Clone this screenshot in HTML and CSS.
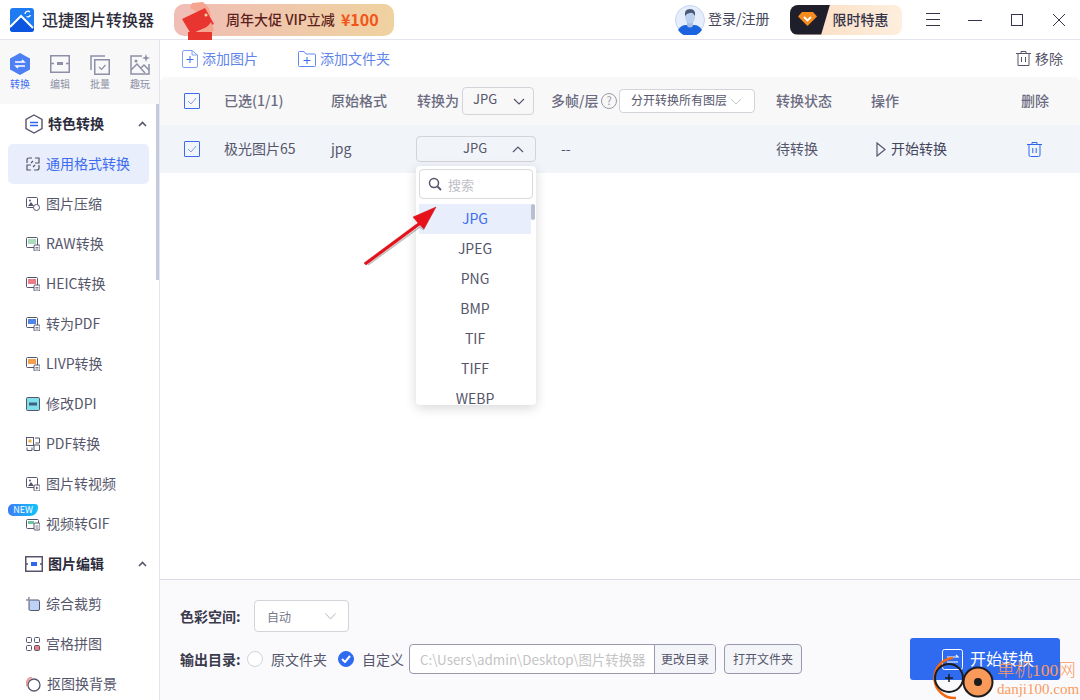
FILE: index.html
```html
<!DOCTYPE html>
<html lang="zh-CN">
<head>
	<meta charset="UTF-8">
	<title>迅捷图片转换器</title>
	<link rel="stylesheet" href="styles.css">
</head>
<body>
<div class="app">
	<div class="topbar">
		<svg class="logo" width="24" height="24" viewBox="0 0 24 24">
			<rect width="24" height="24" rx="3" fill="#1f7bf2"/>
			<path d="M0 18 L11 7 L24 20 V21 Q24 24 21 24 H3 Q0 24 0 21Z" fill="#0b55e0"/>
			<path d="M0 19 L11 8 L23 20" fill="none" stroke="#fff" stroke-width="2"/>
			<path d="M15 6 a3 3 0 0 1 5 -2 M20.500 7 a3 3 0 0 1 -4 1.500" fill="none" stroke="#fff" stroke-width="1.300"/>
		</svg>
		<div class="appName">迅捷图片转换器</div>
		<div class="promo">
			<svg class="promoIco" width="36" height="38" viewBox="0 0 36 38">
				<path d="M7 30 L31 30 L31 38 L7 38Z" fill="#e8352e"/>
				<path d="M9 6 L11 1 L22 0 L28 6 L30 14 L24 14Z" fill="#f4a58f"/>
				<path d="M1 17 L24 6 L33 22 L10 32Z" fill="#e9352f"/>
				<path d="M16 30 Q26 27 30 20 L33 28 L31 30Z" fill="#f4a58f"/>
				<circle cx="25" cy="13" r="1.500" fill="#ffd9a0"/>
			</svg>
			<span class="promoTxt">周年大促 VIP立减</span>
			<span class="promoNum">¥100</span>
		</div>
		<div class="userBox">
			<svg width="30" height="30" viewBox="0 0 30 30">
				<circle cx="15" cy="15" r="14.500" fill="#e6eefb" stroke="#c3d4f2"/>
				<path d="M3 25 Q6 20 11 20 H19 Q24 20 27 25 A14.500 14.500 0 0 1 3 25Z" fill="#1c63e0"/>
				<path d="M12 17 V21 Q15 24 18 21 V17Z" fill="#a9bfe6"/>
				<ellipse cx="15" cy="12" rx="5" ry="6.500" fill="#bcd0ef"/>
				<path d="M10 11 Q9 4 15 4 Q21 4 20 11 Q18 7 15 8 Q12 8 10 11Z" fill="#4a5a78"/>
			</svg>
			<span>登录/注册</span>
		</div>
		<div class="vip">
			<div class="vipIco">
				<svg width="19" height="14" viewBox="0 0 19 14">
					<path d="M4 0 H15 L19 4.500 L9.500 14 L0 4.500Z" fill="#f58a1f"/>
					<path d="M6 5 L9.500 8.500 L13 5" fill="none" stroke="#fff" stroke-width="1.800"/>
				</svg>
			</div>
			<div class="vipTxt">限时特惠</div>
		</div>
		<div class="winBtns">
			<svg width="14" height="13" viewBox="0 0 14 13"><path d="M0 .5 H14 M0 6.500 H14 M0 12.500 H14" stroke="#33334a" fill="none"/></svg>
			<svg class="winMin" width="14" height="14" viewBox="0 0 14 14"><path d="M0 7.500 H14" stroke="#33334a" fill="none"/></svg>
			<svg width="12" height="12" viewBox="0 0 12 12"><rect x=".5" y=".5" width="11" height="11" stroke="#33334a" fill="none"/></svg>
			<svg width="14" height="14" viewBox="0 0 14 14"><path d="M1 1 L13 13 M13 1 L1 13" stroke="#33334a" fill="none"/></svg>
		</div>
	</div>

	<div class="content">
		<div class="side">
			<div class="tabs">
				<div class="tab on">
					<svg width="20" height="22" viewBox="0 0 20 22">
						<path d="M10 0 L20 5.500 V16.500 L10 22 L0 16.500 V5.500Z" fill="#4d7ff5"/>
						<path d="M5 9 H14 L12 7 M15 13 H6 L8 15" fill="none" stroke="#fff" stroke-width="1.500"/>
					</svg>
					<span>转换</span>
				</div>
				<div class="tab">
					<svg width="20" height="22" viewBox="0 0 20 22">
						<rect x=".75" y="2.750" width="18.500" height="16.500" fill="none" stroke="#8d8fa6" stroke-width="1.500"/>
						<path d="M1 10.500 H4 M16 10.500 H19" stroke="#8d8fa6" stroke-width="1.500"/>
						<rect x="7" y="9" width="6" height="3" fill="#8d8fa6"/>
					</svg>
					<span>编辑</span>
				</div>
				<div class="tab">
					<svg width="20" height="22" viewBox="0 0 20 22">
						<path d="M1 17 V3 H15" fill="none" stroke="#8d8fa6" stroke-width="1.500"/>
						<rect x="4.750" y="6.750" width="14.500" height="14.500" fill="none" stroke="#8d8fa6" stroke-width="1.500"/>
						<path d="M9 14 L11.500 16.500 L15.500 12" fill="none" stroke="#8d8fa6" stroke-width="1.200"/>
					</svg>
					<span>批量</span>
				</div>
				<div class="tab">
					<svg width="20" height="22" viewBox="0 0 20 22">
						<path d="M12 3 H1 V21 H19 V11" fill="none" stroke="#8d8fa6" stroke-width="1.500"/>
						<path d="M1 17 L7 11 L15 20 M11 15 L14 12 L19 17" fill="none" stroke="#8d8fa6" stroke-width="1.500"/>
						<circle cx="6" cy="8" r="1.500" fill="#8d8fa6"/>
						<path d="M16 1 L17 4 L20 5 L17 6 L16 9 L15 6 L12 5 L15 4Z" fill="#8d8fa6"/>
					</svg>
					<span>趣玩</span>
				</div>
			</div>
			<div class="menu">
				<div class="group">
					<svg width="18" height="20" viewBox="0 0 18 20">
						<path d="M9 1 L17 5.500 V14.500 L9 19 L1 14.500 V5.500Z" fill="none" stroke="#55566b" stroke-width="1.400"/>
						<path d="M5 8.500 H13 M13 11.500 H5" stroke="#2f66ee" stroke-width="1.500"/>
					</svg>
					<span class="groupName">特色转换</span>
					<svg class="up" width="9" height="6" viewBox="0 0 9 6"><path d="M1 5 L4.500 1.500 L8 5" fill="none" stroke="#55566b" stroke-width="1.600"/></svg>
				</div>
				<div class="item on">
					<svg width="14" height="14" viewBox="0 0 14 14"><path d="M1 6 V3 Q1 1 3 1 H6 M9 1 H13 V6 H9 M5 8 H1 V13 H5 M8 13 H11 Q13 13 13 11 V8 M5 6 L7 4 M9 8 L7 10" fill="none" stroke="#55566b" stroke-width="1.200"/></svg>
					<span>通用格式转换</span>
				</div>
				<div class="item">
					<svg class="fmt" width="14" height="14" viewBox="0 0 14 14"><rect x=".5" y=".5" width="11" height="10" rx="1" fill="#fff" stroke="#55566b"/><path d="M2 9 L5 5 L8 9Z" fill="#55566b"/><circle cx="4" cy="3.500" r="1" fill="#55566b"/><circle cx="10.500" cy="10.500" r="3" fill="#fff" stroke="#55566b"/></svg>
					<span>图片压缩</span>
				</div>
				<div class="item">
					<svg class="fmt" width="14" height="14" viewBox="0 0 14 14"><rect x=".5" y=".5" width="11" height="10" rx="1" fill="#fff" stroke="#55566b"/><rect x="2" y="2" width="8" height="5" fill="#a8dcbc"/><rect x="8" y="8" width="6" height="6" rx="1" fill="#fff" stroke="#55566b"/><path d="M9.500 10.500 H12.500 M9.500 12 H12.500" stroke="#55566b" stroke-width=".8"/></svg>
					<span>RAW转换</span>
				</div>
				<div class="item">
					<svg class="fmt" width="14" height="14" viewBox="0 0 14 14"><rect x=".5" y=".5" width="11" height="10" rx="1" fill="#fff" stroke="#55566b"/><rect x="2" y="2" width="8" height="5" fill="#ee7c86"/><rect x="8" y="8" width="6" height="6" rx="1" fill="#fff" stroke="#55566b"/><path d="M9.500 10.500 H12.500 M9.500 12 H12.500" stroke="#55566b" stroke-width=".8"/></svg>
					<span>HEIC转换</span>
				</div>
				<div class="item">
					<svg class="fmt" width="14" height="14" viewBox="0 0 14 14"><rect x=".5" y=".5" width="11" height="10" rx="1" fill="#fff" stroke="#55566b"/><rect x="2" y="2" width="8" height="5" fill="#4f85e8"/><rect x="8" y="8" width="6" height="6" rx="1" fill="#fff" stroke="#55566b"/><path d="M9.500 10.500 H12.500 M9.500 12 H12.500" stroke="#55566b" stroke-width=".8"/></svg>
					<span>转为PDF</span>
				</div>
				<div class="item">
					<svg class="fmt" width="14" height="14" viewBox="0 0 14 14"><rect x=".5" y=".5" width="11" height="10" rx="1" fill="#fff" stroke="#55566b"/><rect x="2" y="2" width="8" height="5" fill="#f4a04a"/><rect x="8" y="8" width="6" height="6" rx="1" fill="#fff" stroke="#55566b"/><path d="M9.500 10.500 H12.500 M9.500 12 H12.500" stroke="#55566b" stroke-width=".8"/></svg>
					<span>LIVP转换</span>
				</div>
				<div class="item">
					<svg class="fmt" width="14" height="14" viewBox="0 0 14 14"><rect x=".5" y=".5" width="13" height="13" rx="1" fill="#7fe0ea" stroke="#55566b"/><rect x="3" y="5.500" width="8" height="3" fill="#3f5f80"/></svg>
					<span>修改DPI</span>
				</div>
				<div class="item">
					<svg class="fmt" width="14" height="14" viewBox="0 0 14 14"><rect x=".5" y=".5" width="7" height="8" fill="#fff" stroke="#55566b"/><rect x="2.500" y="2.500" width="3" height="3" fill="#e8b04a"/><path d="M9 1 H13.500 V6 H9.500 M1 10.500 V13.500 H6 V10.500 M8 8 H13.500 V13.500 H8Z" fill="none" stroke="#55566b"/></svg>
					<span>PDF转换</span>
				</div>
				<div class="item">
					<svg class="fmt" width="14" height="14" viewBox="0 0 14 14"><rect x=".5" y=".5" width="11" height="10" rx="1" fill="#fff" stroke="#55566b"/><path d="M2 9 L5 5 L8 9Z" fill="#55566b"/><circle cx="4" cy="3.500" r="1" fill="#55566b"/><rect x="8" y="8" width="6" height="6" rx="1" fill="#fff" stroke="#55566b"/><path d="M10 9.500 L12.500 11 L10 12.500Z" fill="#55566b"/></svg>
					<span>图片转视频</span>
				</div>
				<div class="item">
					<svg class="fmt" width="14" height="14" viewBox="0 0 14 14"><rect x=".5" y="2.500" width="12" height="9" rx="1" fill="#fff" stroke="#55566b"/><rect x="2" y="4" width="6" height="3" fill="#6cc6a0"/><rect x="8" y="6" width="6" height="7" rx="1" fill="#fff" stroke="#55566b"/><path d="M9.500 9 H12.500 M9.500 11 H12.500" stroke="#55566b" stroke-width=".8"/></svg>
					<span>视频转GIF</span>
					<i class="newTag">NEW</i>
				</div>
				<div class="group">
					<svg width="18" height="16" viewBox="0 0 18 16">
						<rect x=".75" y=".75" width="16.500" height="14.500" fill="none" stroke="#55566b" stroke-width="1.500"/>
						<path d="M1 8 H3 M15 8 H17" stroke="#55566b" stroke-width="1.500"/>
						<rect x="6" y="6" width="6" height="4" fill="#2f66ee"/>
					</svg>
					<span class="groupName">图片编辑</span>
					<svg class="up" width="9" height="6" viewBox="0 0 9 6"><path d="M1 5 L4.500 1.500 L8 5" fill="none" stroke="#55566b" stroke-width="1.600"/></svg>
				</div>
				<div class="item">
					<svg class="fmt" width="14" height="14" viewBox="0 0 14 14"><rect x="3" y="3" width="10.500" height="10.500" rx="1.500" fill="#bcd2f6" stroke="#55566b"/><path d="M3 0 V3 H0" fill="none" stroke="#55566b"/></svg>
					<span>综合裁剪</span>
				</div>
				<div class="item">
					<svg class="fmt" width="14" height="14" viewBox="0 0 14 14"><rect x=".5" y=".5" width="5" height="5" rx="1" fill="none" stroke="#55566b"/><rect x="8.500" y=".5" width="5" height="5" rx="1" fill="none" stroke="#55566b"/><rect x=".5" y="8.500" width="5" height="5" rx="1" fill="none" stroke="#55566b"/><rect x="8.500" y="8.500" width="5" height="5" rx="1" fill="#ee7c7c" stroke="#55566b"/></svg>
					<span>宫格拼图</span>
				</div>
				<div class="item">
					<svg class="fmt" width="15" height="15" viewBox="0 0 15 15"><path d="M6 0 A7 7 0 0 0 1 9" fill="none" stroke="#ee9a9a" stroke-width="2"/><circle cx="8" cy="8" r="6" fill="#fff" stroke="#55566b" stroke-width="1.300"/></svg>
					<span>抠图换背景</span>
				</div>
			</div>
			<div class="sideBar"></div>
		</div>

		<div class="main">
			<div class="tools">
				<div class="toolBtn">
					<svg width="16" height="18" viewBox="0 0 16 18"><path d="M10 .5 H2 Q.5 .5 .5 2 V16 Q.5 17.500 2 17.500 H14 Q15.500 17.500 15.500 16 V5Z M10 .5 V5 H15.500" fill="none" stroke="#7ea1f2"/><path d="M4.500 9.500 H11.500 M8 6 V13" stroke="#3d6cf0"/></svg>
					<span>添加图片</span>
				</div>
				<div class="toolBtn">
					<svg width="18" height="16" viewBox="0 0 18 16"><path d="M.5 1.500 Q.5 .5 1.500 .5 H6 L8 3 H16.500 Q17.500 3 17.500 4 V14.500 Q17.500 15.500 16.500 15.500 H1.500 Q.5 15.500 .5 14.500Z" fill="none" stroke="#5f8aef"/><path d="M5.500 9.500 H12.500 M9 6 V13" stroke="#3d6cf0"/></svg>
					<span>添加文件夹</span>
				</div>
				<div class="removeBtn">
					<svg width="15" height="15" viewBox="0 0 15 15"><path d="M0 2.500 H15 M5 2.500 V.5 H10 V2.500 M2 2.500 V14.500 H13 V2.500 M5.500 6 V11 M9.500 6 V11" fill="none" stroke="#55566b"/></svg>
					<span>移除</span>
				</div>
			</div>

			<div class="grid head">
				<span class="chk"><svg width="10" height="8" viewBox="0 0 10 8"><path d="M1 4 L4 7 L9 1" fill="none" stroke="#7ea1f2"/></svg></span>
				<span>已选(1/1)</span>
				<span>原始格式</span>
				<div class="cellFlex">
					<span class="fmtLabel">转换为</span>
					<div class="sel selFmt"><span>JPG</span><svg width="12" height="7" viewBox="0 0 12 7"><path d="M1 1 L6 6 L11 1" fill="none" stroke="#55566b" stroke-width="1.200"/></svg></div>
				</div>
				<div class="cellFlex">
					<span class="layerLabel">多帧/层</span>
					<svg class="help" width="16" height="16" viewBox="0 0 16 16"><circle cx="8" cy="8" r="7.500" fill="none" stroke="#9a9aa8"/><text x="8" y="12" text-anchor="middle" class="helpTxt">?</text></svg>
					<div class="sel selLayer"><span>分开转换所有图层</span><svg width="12" height="7" viewBox="0 0 12 7"><path d="M1 1 L6 6 L11 1" fill="none" stroke="#c4c4cc"/></svg></div>
				</div>
				<span>转换状态</span>
				<span>操作</span>
				<span>删除</span>
			</div>

			<div class="grid row">
				<span class="chk"><svg width="10" height="8" viewBox="0 0 10 8"><path d="M1 4 L4 7 L9 1" fill="none" stroke="#7ea1f2"/></svg></span>
				<span>极光图片65</span>
				<span>jpg</span>
				<div class="sel selOpen"><span>JPG</span><svg width="12" height="7" viewBox="0 0 12 7"><path d="M1 6 L6 1 L11 6" fill="none" stroke="#55566b" stroke-width="1.200"/></svg></div>
				<span class="dash">--</span>
				<span>待转换</span>
				<div class="startBtn">
					<svg width="10" height="15" viewBox="0 0 10 15"><path d="M1 1 L9 7.500 L1 14Z" fill="none" stroke="#55566b" stroke-width="1.200"/></svg>
					<span>开始转换</span>
				</div>
				<svg class="del" width="15" height="15" viewBox="0 0 15 15"><path d="M0 2.500 H15 M5 2.500 V.5 H10 V2.500 M2 2.500 V13 Q2 14.500 3.500 14.500 H11.500 Q13 14.500 13 13 V2.500 M5.800 6 V11 M9.200 6 V11" fill="none" stroke="#2f66ee"/></svg>
			</div>

			<div class="blank"></div>

			<div class="foot">
				<div class="footLine">
					<span class="footLabel">色彩空间:</span>
					<div class="sel selColor"><span>自动</span><svg width="11" height="7" viewBox="0 0 11 7"><path d="M.5 .5 L5.500 6 L10.500 .5" fill="none" stroke="#b8b8c0"/></svg></div>
				</div>
				<div class="footLine second">
					<span class="footLabel">输出目录:</span>
					<span class="radio"></span>
					<span class="radioTxt">原文件夹</span>
					<span class="radio checked"><svg width="10" height="8" viewBox="0 0 10 8"><path d="M1 4 L4 7 L9 1" fill="none" stroke="#fff" stroke-width="2"/></svg></span>
					<span class="radioTxt">自定义</span>
					<div class="pathBox">
						<span class="pathTxt">C:\Users\admin\Desktop\图片转换器</span>
						<span class="pathBtn">更改目录</span>
					</div>
					<span class="openBtn">打开文件夹</span>
				</div>
				<div class="goBtn">
					<svg width="21" height="21" viewBox="0 0 21 21"><rect x=".5" y=".5" width="20" height="20" rx="2" fill="none" stroke="#fff"/><path d="M5 8 H16 L14 6 M16 13 H5" fill="none" stroke="#fff" stroke-width="1.200"/></svg>
					<span>开始转换</span>
				</div>
			</div>
		</div>
	</div>

	<!-- dropdown opened from the row select -->
	<div class="drop">
		<div class="search">
			<svg width="14" height="14" viewBox="0 0 14 14"><circle cx="6" cy="6" r="4.500" fill="none" stroke="#55566b" stroke-width="1.500"/><path d="M9.500 9.500 L13 13" stroke="#55566b" stroke-width="1.800"/></svg>
			<span>搜索</span>
		</div>
		<div class="opt on">JPG</div>
		<div class="opt">JPEG</div>
		<div class="opt">PNG</div>
		<div class="opt">BMP</div>
		<div class="opt">TIF</div>
		<div class="opt">TIFF</div>
		<div class="opt">WEBP</div>
		<div class="dropBar"></div>
	</div>

	<svg class="arrow" width="80" height="64" viewBox="0 0 80 64">
		<path d="M2 60 L56 20 L51 14 L74 4 L62 26 L58 22 L4 62Z" fill="#e8101a" stroke="#c5121a" stroke-width=".5"/>
		<path d="M6 62 L58 24 L62 27" fill="none" stroke="#000" stroke-opacity=".25" stroke-width="1.500"/>
	</svg>

	<!-- site watermark -->
	<div class="mark">
		<svg width="66" height="46" viewBox="0 0 66 46">
			<path d="M21 4 A20 20 0 0 0 24 44" fill="none" stroke="#f5680f" stroke-width="2.500"/>
			<circle cx="17" cy="24" r="14" fill="none" stroke="#1c1c1c" stroke-width="2"/>
			<path d="M13 24 H21 M17 20 V28" stroke="#1c1c1c" stroke-width="1.500"/>
			<circle cx="46" cy="28" r="14.500" fill="#f9995a" stroke="#1c1c1c" stroke-width="2"/>
			<circle cx="46" cy="28" r="4" fill="#1c1c1c"/>
		</svg>
		<div class="markTxt">
			<div class="markCn">单机100网</div>
			<div class="markEn">danji100.com</div>
		</div>
	</div>
</div>
</body>
</html>
```

FILE: styles.css
```css
html, body {
	margin: 0;
	padding: 0;
	background: #fff;
	font-family: "Noto Sans CJK SC", "Noto Sans", sans-serif;
	font-size: 14px;
	color: #55566b;
}

.app {
	position: relative;
	width: 1080px;
	height: 700px;
	overflow: hidden;
	display: flex;
	flex-direction: column;
}

/* title bar */
.topbar {
	height: 39px;
	flex: none;
	display: flex;
	align-items: center;
	padding-left: 10px;
	border-bottom: 1px solid #e4e4ee;
}
.appName {
	margin-left: 8px;
	width: 132px;
	font-size: 16px;
	font-weight: 500;
	color: #2c2c3c;
	white-space: nowrap;
	padding-bottom: 2px;
}
.promo {
	width: 220px;
	height: 32px;
	box-sizing: border-box;
	padding: 0 0 2px 52px;
	display: flex;
	align-items: center;
	border-radius: 10px;
	background: linear-gradient(90deg, #f0bdb6, #efd2a0);
	position: relative;
	white-space: nowrap;
}
.promoIco {
	position: absolute;
	left: 7px;
	top: -2px;
}
.promoTxt {
	font-weight: 500;
	color: #5e1f1c;
}
.promoNum {
	margin-left: 6px;
	font-size: 16px;
	font-weight: 700;
	color: #f2541b;
}
.userBox {
	margin-left: 281px;
	display: flex;
	align-items: center;
	gap: 3px;
	width: 115px;
	white-space: nowrap;
	color: #44445a;
}
.userBox span {
	padding-bottom: 3px;
}
.vip {
	width: 112px;
	height: 30px;
	display: flex;
	border-radius: 8px;
	overflow: hidden;
	background: linear-gradient(90deg, #fbdcc0, #fdeedd);
}
.vipIco {
	width: 40px;
	flex: none;
	box-sizing: border-box;
	padding: 0 6px 2px 0;
	display: flex;
	align-items: center;
	justify-content: center;
	background: #1f1f2b;
	clip-path: polygon(0 0, 100% 0, 78% 100%, 0 100%);
}
.vipTxt {
	flex: 1;
	padding-right: 11px;
	text-align: center;
	line-height: 29px;
	font-weight: 500;
	color: #33334a;
	white-space: nowrap;
}
.winBtns {
	margin-left: 24px;
	display: flex;
	align-items: center;
	gap: 29px;
}
.winMin {
	margin-left: -1px;
}

.content {
	flex: 1;
	display: flex;
	min-height: 0;
}

/* left side */
.side {
	width: 159px;
	flex: none;
	border-right: 1px solid #e4e4ee;
	position: relative;
	overflow: hidden;
}
.tabs {
	height: 64px;
	box-sizing: border-box;
	padding: 13px 0 0 10px;
	display: flex;
	background: #f8f8f8;
}
.tab {
	width: 40px;
	flex: none;
	display: flex;
	flex-direction: column;
	align-items: flex-start;
	font-size: 10px;
	color: #8d8fa6;
}
.tab span {
	line-height: 15px;
	margin-top: 1px;
}
.tab.on {
	color: #3d6cf0;
}
.menu {
	padding-right: 10px;
}
.group {
	height: 40px;
	display: flex;
	align-items: center;
	padding-left: 25px;
	position: relative;
}
.groupName {
	margin-left: 5px;
	padding-bottom: 2px;
	font-weight: 700;
	color: #2c2c3c;
}
.up {
	position: absolute;
	left: 138px;
	top: 17px;
}
.item {
	height: 40px;
	margin-left: 8px;
	padding-left: 18px;
	display: flex;
	align-items: center;
	position: relative;
	border-radius: 5px;
	white-space: nowrap;
}
.item span {
	margin-left: 6px;
	padding-bottom: 2px;
}
.item svg {
	flex: none;
}
.item.on {
	background: #e8eefb;
	color: #3d6cf0;
}
.newTag {
	position: absolute;
	left: 0;
	top: 0;
	width: 30px;
	height: 12px;
	font-style: normal;
	font-size: 9px;
	line-height: 12px;
	text-align: center;
	color: #fff;
	background: linear-gradient(90deg, #3d7cf5, #10c4fa);
	border-radius: 5px 3px 8px 5px;
}
.sideBar {
	position: absolute;
	left: 156px;
	top: 64px;
	width: 3px;
	height: 176px;
	background: #c5cbdf;
}

/* main area */
.main {
	flex: 1;
	display: flex;
	flex-direction: column;
	min-width: 0;
}
.tools {
	height: 37px;
	flex: none;
	display: flex;
	align-items: center;
	padding-left: 22px;
	padding-right: 17px;
	color: #5f84ea;
}
.toolBtn {
	display: flex;
	align-items: center;
	gap: 4px;
	margin-right: 40px;
}
.toolBtn span, .removeBtn span {
	padding-bottom: 2px;
}
.removeBtn {
	margin-left: auto;
	display: flex;
	align-items: center;
	gap: 4px;
	color: #55566b;
}

.grid {
	height: 48px;
	flex: none;
	display: grid;
	grid-template-columns: 40px 107px 86px 134px 225px 95px 150px 1fr;
	align-items: center;
	padding-left: 24px;
}
.grid > span, .cellFlex > span, .startBtn span {
	padding-bottom: 2px;
}
.head {
	background: #f8f8f8;
	border-radius: 6px 6px 0 0;
	font-weight: 500;
	color: #6a6b80;
}
.row {
	background: #f1f4f9;
}
.grid > .chk {
	width: 16px;
	height: 16px;
	padding: 0;
	box-sizing: border-box;
	border: 1px solid #3d6cf0;
	border-radius: 1px;
	display: flex;
	align-items: center;
	justify-content: center;
}
.cellFlex {
	display: flex;
	align-items: center;
}
.fmtLabel {
	width: 42px;
	flex: none;
	white-space: nowrap;
}
.layerLabel {
	width: 50px;
	flex: none;
	white-space: nowrap;
}
.sel {
	box-sizing: border-box;
	display: flex;
	align-items: center;
	justify-content: space-between;
	border: 1px solid #d3d3d9;
	border-radius: 4px;
	font-weight: 400;
	font-size: 13px;
	background: #fff;
	color: #55566b;
}
.sel span {
	padding-bottom: 3px;
}
.selFmt {
	width: 72px;
	height: 28px;
	margin-left: 3px;
	padding: 0 8px 0 10px;
	flex: none;
	background: #f8f8f8;
}
.selFmt span {
	padding-bottom: 5px;
}
.help {
	flex: none;
}
.helpTxt {
	font-size: 11px;
	fill: #9a9aa8;
	font-weight: 400;
}
.selLayer {
	width: 136px;
	height: 24px;
	margin-left: 2px;
	padding: 0 12px 0 11px;
	flex: none;
	font-size: 12px;
	white-space: nowrap;
}
.selOpen {
	width: 120px;
	height: 26px;
	margin-left: -1px;
	padding: 0 11px 0 46px;
	background: #f1f4f9;
}
.dash {
	padding-left: 10px;
}
.startBtn {
	display: flex;
	align-items: center;
	gap: 5px;
	padding-left: 5px;
	color: #44445a;
}
.del {
	margin-left: 6px;
}
.blank {
	flex: 1;
}

/* bottom panel */
.foot {
	height: 121px;
	flex: none;
	box-sizing: border-box;
	padding: 20px 0 0 20px;
	border-top: 1px solid #d9dde6;
	background: #fafafd;
	position: relative;
}
.footLine {
	display: flex;
	align-items: center;
	height: 32px;
}
.footLine.second {
	margin-top: 12px;
	height: 30px;
}
.footLabel {
	font-weight: 700;
	color: #3a3a4c;
	white-space: nowrap;
	width: 67px;
	flex: none;
}
.selColor {
	width: 95px;
	height: 32px;
	margin-left: 7px;
	padding: 0 12px;
	font-size: 12px;
	color: #77778a;
}
.selColor span {
	padding-bottom: 0;
}
.radio {
	width: 16px;
	height: 16px;
	box-sizing: border-box;
	border: 1px solid #d3d3d9;
	border-radius: 50%;
	background: #fff;
	display: flex;
	align-items: center;
	justify-content: center;
	flex: none;
}
.radio.checked {
	background: #2f6bf0;
	border-color: #2f6bf0;
}
.radioTxt {
	margin-left: 8px;
	margin-right: 11px;
	white-space: nowrap;
}
.pathBox {
	width: 307px;
	height: 30px;
	box-sizing: border-box;
	margin-left: -6px;
	flex: none;
	display: flex;
	align-items: center;
	border: 1px solid #9a98ae;
	border-radius: 4px;
	background: #fff;
	overflow: hidden;
}
.pathTxt {
	flex: 1;
	padding-left: 10px;
	font-size: 13.400px;
	color: #c4c4c4;
	white-space: nowrap;
	overflow: hidden;
}
.pathBtn {
	width: 61px;
	flex: none;
	height: 100%;
	box-sizing: border-box;
	border-left: 1px solid #9a98ae;
	background: #f3f5f9;
	text-align: center;
	line-height: 28px;
	font-size: 12px;
	white-space: nowrap;
}
.openBtn {
	margin-left: 8px;
	width: 78px;
	height: 30px;
	flex: none;
	box-sizing: border-box;
	border: 1px solid #9a98ae;
	border-radius: 4px;
	background: #f3f5f9;
	text-align: center;
	line-height: 28px;
	font-size: 12px;
	white-space: nowrap;
}
.goBtn {
	position: absolute;
	left: 750px;
	top: 58px;
	width: 150px;
	height: 42px;
	box-sizing: border-box;
	padding-left: 6px;
	display: flex;
	align-items: center;
	justify-content: center;
	gap: 7px;
	border-radius: 3px;
	background: #2f6bf0;
	color: #fff;
	font-size: 16px;
}
.goBtn span {
	padding-bottom: 2px;
}

/* select dropdown */
.drop {
	position: absolute;
	left: 416px;
	top: 166px;
	width: 120px;
	height: 239px;
	overflow: hidden;
	background: #fff;
	border-radius: 4px;
	box-shadow: 0 3px 12px rgba(0, 0, 0, 0.16);
}
.search {
	width: 114px;
	height: 30px;
	box-sizing: border-box;
	margin: 3px 0 5px 3px;
	padding-left: 8px;
	display: flex;
	align-items: center;
	gap: 6px;
	border: 1px solid #d9d9de;
	border-radius: 4px;
	font-size: 13px;
	color: #c0c0c6;
}
.opt {
	height: 30px;
	width: 112px;
	margin-left: 3px;
	line-height: 28px;
	text-align: center;
}
.opt.on {
	background: #e8eefb;
	color: #3d6cf0;
}
.dropBar {
	position: absolute;
	left: 115px;
	top: 38px;
	width: 4px;
	height: 16px;
	border-radius: 2px;
	background: #b9bfd0;
}
.arrow {
	position: absolute;
	left: 362px;
	top: 203px;
}

/* watermark */
.mark {
	position: absolute;
	left: 932px;
	top: 654px;
	display: flex;
}
.mark svg {
	margin-right: -1px;
	flex: none;
}
.markTxt {
	font-family: "Liberation Serif", "Noto Sans CJK SC", serif;
	color: #fb9a5e;
	white-space: nowrap;
}
.markCn {
	font-size: 17.500px;
	line-height: 20px;
	margin-top: 6px;
	font-weight: 300;
}
.markEn {
	font-size: 15px;
	line-height: 18px;
}
```
